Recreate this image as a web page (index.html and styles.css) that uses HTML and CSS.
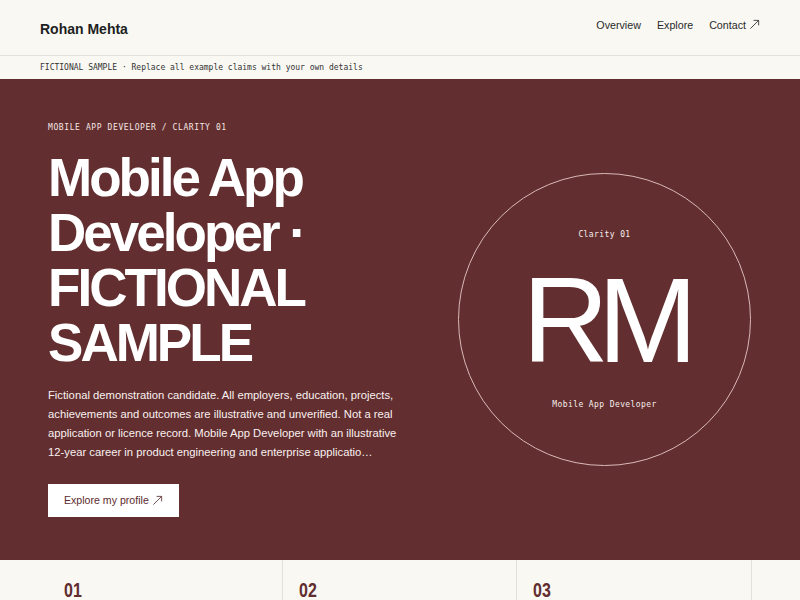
FILE: index.html
```html
<!DOCTYPE html>
<html lang="en">
<head>
<meta charset="utf-8">
<title>Rohan Mehta — Mobile App Developer</title>
<link rel="stylesheet" href="styles.css">
</head>
<body>
<header class="site-header">
  <div class="brand">Rohan Mehta</div>
  <nav class="nav">
    <a href="#overview">Overview</a>
    <a href="#explore">Explore</a>
    <a href="#contact" class="ext">Contact <svg class="arrow" viewBox="0 0 12 12" aria-hidden="true"><path d="M1.5 10.5 L10.5 1.5 M5 1.5 H10.5 V7"/></svg></a>
  </nav>
</header>
<div class="notice">FICTIONAL SAMPLE · Replace all example claims with your own details</div>
<section class="hero">
  <div class="hero-copy">
    <p class="eyebrow">MOBILE APP DEVELOPER / CLARITY 01</p>
    <h1 class="title">Mobile App Developer · FICTIONAL SAMPLE</h1>
    <p class="lede">Fictional demonstration candidate. All employers, education, projects, achievements and outcomes are illustrative and unverified. Not a real application or licence record. Mobile App Developer with an illustrative 12-year career in product engineering and enterprise applicatio…</p>
    <a class="btn" href="#overview">Explore my profile <svg class="arrow" viewBox="0 0 12 12" aria-hidden="true"><path d="M1.5 10.5 L10.5 1.5 M5 1.5 H10.5 V7"/></svg></a>
  </div>
  <div class="monogram">
    <span class="mono-label">Clarity 01</span>
    <span class="initials">RM</span>
    <span class="mono-label">Mobile App Developer</span>
  </div>
</section>
<section class="stats">
  <div class="stat"><span class="num">01</span></div>
  <div class="stat"><span class="num">02</span></div>
  <div class="stat"><span class="num">03</span></div>
</section>
</body>
</html>
```
FILE: styles.css
```css
* { box-sizing: border-box; }
html, body { margin: 0; padding: 0; }
body {
  background: #f9f8f3;
  font-family: "Liberation Sans", Arial, sans-serif;
  color: #1f1f1f;
}
a { color: inherit; text-decoration: none; }

.site-header {
  height: 56px;
  padding: 0 40px;
  display: flex;
  align-items: center;
  justify-content: space-between;
  border-bottom: 1px solid #e3e1db;
}
.brand {
  font-weight: 700;
  font-size: 14px;
  color: #1e1f22;
  padding-top: 3px;
}
.nav {
  display: flex;
  align-items: center;
  gap: 16px;
  font-size: 10.7px;
  color: #2a2a2a;
  padding-bottom: 6px;
}
.ext {
  display: inline-flex;
  align-items: center;
  gap: 3px;
}
.arrow {
  width: 11px;
  height: 11px;
  fill: none;
  stroke: currentColor;
  stroke-width: 0.9;
}

.notice {
  height: 23px;
  padding: 0 40px;
  display: flex;
  align-items: center;
  font-family: "DejaVu Sans Mono", monospace;
  font-size: 8px;
  color: #333;
}

.hero {
  background: #632e2f;
  min-height: 481px;
  padding: 0 49px 0 48px;
  display: flex;
  align-items: center;
  justify-content: space-between;
  color: #fff;
}
.hero-copy {
  width: 360px;
}
.eyebrow {
  margin: 0 0 16px;
  font-family: "DejaVu Sans Mono", monospace;
  font-size: 8px;
  line-height: 12px;
  letter-spacing: 0.6px;
  color: #f3e6e4;
}
.title {
  margin: 0 0 16px;
  font-size: 53px;
  line-height: 55px;
  font-weight: 700;
  letter-spacing: -0.056em;
  color: #fff;
}
.lede {
  margin: 0 0 22px;
  font-size: 11.25px;
  line-height: 19.1px;
  color: #f8f1f0;
}
.btn {
  display: inline-flex;
  align-items: center;
  gap: 3px;
  background: #fff;
  color: #5c2a2c;
  font-size: 10.6px;
  line-height: 15px;
  padding: 9px 16px;
}

.monogram {
  width: 293px;
  aspect-ratio: 1;
  border: 1px solid #d9b9b7;
  border-radius: 50%;
  display: flex;
  flex-direction: column;
  align-items: center;
  justify-content: center;
  gap: 19px;
}
.mono-label {
  font-family: "DejaVu Sans Mono", monospace;
  font-size: 8px;
  line-height: 12px;
  letter-spacing: 0.4px;
  color: #f7efee;
}
.initials {
  font-size: 120px;
  line-height: 120px;
  font-weight: 400;
  letter-spacing: -11px;
  color: #fff;
}

.stats {
  display: grid;
  grid-template-columns: repeat(3, 1fr);
  margin: 0 48px;
}
.stat {
  border-right: 1px solid #e3e1db;
  padding: 19px 16px 24px;
}
.num {
  display: inline-block;
  font-family: "Liberation Sans Narrow", "Arial Narrow", sans-serif;
  font-weight: 700;
  font-size: 19.5px;
  line-height: 22px;
  color: #612d2f;
  transform: scaleX(0.82);
  transform-origin: left center;
}
```
